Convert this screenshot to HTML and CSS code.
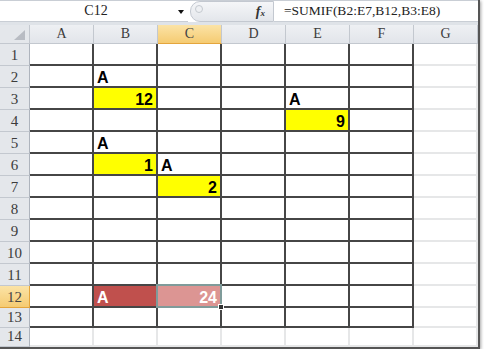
FILE: index.html
```html
<!DOCTYPE html>
<html lang="zh-TW">
<head>
    <meta charset="UTF-8">
    <title>SUMIF</title>
    <link rel="stylesheet" href="styles.css">
</head>
<body>

<div class="window">
    <div class="formula-bar">
        <div class="name-box"><span class="ref">C12</span><span class="arrow"></span></div>
        <div class="fx-group"><span class="knob"></span><span class="fx">f<small>x</small></span></div>
        <div class="formula">=SUMIF(B2:E7,B12,B3:E8)</div>
    </div>

    <div class="sheet">
        <div class="row head">
            <div class="corner"><span class="tri"></span></div>
            <div class="ch">A</div><div class="ch">B</div><div class="ch on">C</div><div class="ch">D</div>
            <div class="ch">E</div><div class="ch">F</div><div class="ch">G</div>
        </div>

        <div class="row">
            <div class="rh">1</div>
            <div class="cell bd"></div><div class="cell bd"></div><div class="cell bd"></div><div class="cell bd"></div><div class="cell bd"></div><div class="cell bd"></div><div class="cell"></div>
        </div>
        <div class="row">
            <div class="rh">2</div>
            <div class="cell bd"></div><div class="cell bd">A</div><div class="cell bd"></div><div class="cell bd"></div><div class="cell bd"></div><div class="cell bd"></div><div class="cell"></div>
        </div>
        <div class="row">
            <div class="rh">3</div>
            <div class="cell bd"></div><div class="cell bd num yel">12</div><div class="cell bd"></div><div class="cell bd"></div><div class="cell bd">A</div><div class="cell bd"></div><div class="cell"></div>
        </div>
        <div class="row">
            <div class="rh">4</div>
            <div class="cell bd"></div><div class="cell bd"></div><div class="cell bd"></div><div class="cell bd"></div><div class="cell bd num yel">9</div><div class="cell bd"></div><div class="cell"></div>
        </div>
        <div class="row">
            <div class="rh">5</div>
            <div class="cell bd"></div><div class="cell bd">A</div><div class="cell bd"></div><div class="cell bd"></div><div class="cell bd"></div><div class="cell bd"></div><div class="cell"></div>
        </div>
        <div class="row">
            <div class="rh">6</div>
            <div class="cell bd"></div><div class="cell bd num yel">1</div><div class="cell bd">A</div><div class="cell bd"></div><div class="cell bd"></div><div class="cell bd"></div><div class="cell"></div>
        </div>
        <div class="row">
            <div class="rh">7</div>
            <div class="cell bd"></div><div class="cell bd"></div><div class="cell bd num yel">2</div><div class="cell bd"></div><div class="cell bd"></div><div class="cell bd"></div><div class="cell"></div>
        </div>
        <div class="row">
            <div class="rh">8</div>
            <div class="cell bd"></div><div class="cell bd"></div><div class="cell bd"></div><div class="cell bd"></div><div class="cell bd"></div><div class="cell bd"></div><div class="cell"></div>
        </div>
        <div class="row">
            <div class="rh">9</div>
            <div class="cell bd"></div><div class="cell bd"></div><div class="cell bd"></div><div class="cell bd"></div><div class="cell bd"></div><div class="cell bd"></div><div class="cell"></div>
        </div>
        <div class="row">
            <div class="rh">10</div>
            <div class="cell bd"></div><div class="cell bd"></div><div class="cell bd"></div><div class="cell bd"></div><div class="cell bd"></div><div class="cell bd"></div><div class="cell"></div>
        </div>
        <div class="row">
            <div class="rh">11</div>
            <div class="cell bd"></div><div class="cell bd"></div><div class="cell bd"></div><div class="cell bd"></div><div class="cell bd"></div><div class="cell bd"></div><div class="cell"></div>
        </div>
        <div class="row">
            <div class="rh on">12</div>
            <div class="cell bd"></div><div class="cell bd red">A</div><div class="cell bd num pink sel">24</div><div class="cell bd"></div><div class="cell bd"></div><div class="cell bd"></div><div class="cell"></div>
        </div>
        <div class="row short">
            <div class="rh">13</div>
            <div class="cell bd"></div><div class="cell bd"></div><div class="cell bd"></div><div class="cell bd"></div><div class="cell bd"></div><div class="cell bd"></div><div class="cell"></div>
        </div>
        <div class="row last">
            <div class="rh">14</div>
            <div class="cell"></div><div class="cell"></div><div class="cell"></div><div class="cell"></div><div class="cell"></div><div class="cell"></div><div class="cell"></div>
        </div>
    </div>
</div>

</body>
</html>
```

FILE: styles.css
```css
body {
    margin: 0;
    background-color: #fff;
}

.window {
    width: 478px;
    height: 347px;
    overflow: hidden;
    background-color: #dfe3e8;
    border-right: 2px solid #555;
    border-bottom: 2px solid #555;
    box-shadow: 1px 1px 3px rgba(0, 0, 0, 0.35);
}

/* barra de fórmulas */
.formula-bar {
    display: flex;
    height: 22px;
    margin-bottom: 3px;
    background-color: #fff;
    border-top: 1px solid #c9ced5;
    box-sizing: border-box;
    font-family: "Liberation Serif", "Noto Sans CJK TC", serif;
    color: #222;
}

.name-box {
    width: 188px;
    display: flex;
    align-items: center;
    border-bottom: 1px solid #c9ced5;
}

.ref {
    flex: 1;
    text-align: center;
    font-size: 14px;
    padding-left: 14px;
}

.arrow {
    width: 0;
    height: 0;
    margin: 1px 4px 0 0;
    border-left: 3px solid transparent;
    border-right: 3px solid transparent;
    border-top: 4px solid #111;
}

.fx-group {
    width: 84px;
    margin: 0 0 0 2px;
    display: flex;
    align-items: center;
    justify-content: space-between;
    padding: 0 8px 0 4px;
    box-sizing: border-box;
    border: 1px solid #c3c8d0;
    border-radius: 10px 0 0 10px;
    background: linear-gradient(#f5f6f8, #e3e6eb);
}

.knob {
    width: 6px;
    height: 6px;
    border-radius: 50%;
    border: 1px solid #c4c9cf;
    background-color: #eef0f3;
    margin-bottom: 6px;
}

.fx {
    font-style: italic;
    font-weight: bold;
    font-size: 14px;
    color: #333;
}

.fx small {
    font-size: 9px;
}

.formula {
    flex: 1;
    font-size: 13.5px;
    line-height: 20px;
    padding-left: 10px;
    border-bottom: 1px solid #c9ced5;
}

/* hoja */
.row {
    display: grid;
    grid-template-columns: 30px repeat(7, 64px);
    height: 22px;
}

.row.head {
    height: 19px;
}

.row.short {
    height: 20px;
}

.row.last {
    height: 19px;
}

.corner,
.ch,
.rh {
    box-sizing: border-box;
    background-color: #e4e7eb;
    border-right: 1px solid #c3c8cf;
    border-bottom: 1px solid #c3c8cf;
    font-family: "Liberation Serif", serif;
    font-size: 14px;
    color: #3c3c3c;
    display: flex;
    justify-content: center;
}

.ch {
    align-items: center;
    background: linear-gradient(#eef0f3, #e2e5ea);
}

.rh {
    align-items: flex-end;
    padding-bottom: 1px;
    font-size: 15px;
    border-right: 1px solid #aeb4bd;
}

.ch.on,
.rh.on {
    background: linear-gradient(#fbe3a6, #f5cb72);
    border-bottom: 1px solid #e4a53c;
    color: #444;
}

.rh.on {
    border-right: 1px solid #e4a53c;
}

.corner {
    justify-content: flex-end;
    align-items: flex-end;
    padding: 0 4px 3px 0;
}

.tri {
    width: 0;
    height: 0;
    border-left: 11px solid transparent;
    border-bottom: 10px solid #b8bcc3;
}

.cell {
    box-sizing: border-box;
    background-color: #fff;
    border-right: 2px solid #e6e7e8;
    border-bottom: 2px solid #e6e7e8;
    display: flex;
    align-items: flex-end;
    padding: 0 3px;
    font-family: "Liberation Sans", Arial, sans-serif;
    font-weight: bold;
    font-size: 16px;
    line-height: 16px;
    color: #000;
}

.cell.bd {
    border-right-color: #464646;
    border-bottom-color: #464646;
}

.num {
    justify-content: flex-end;
}

.yel {
    background-color: #ffff00;
}

.red {
    background-color: #c0504d;
    color: #fff;
}

.pink {
    background-color: #dc9593;
    color: #fff;
}

/* celda activa */
.sel {
    position: relative;
}

.sel::before {
    content: "";
    position: absolute;
    left: -2px;
    top: -2px;
    right: -2px;
    bottom: -2px;
    border: 2px solid #7f9b9a;
}

.sel::after {
    content: "";
    position: absolute;
    right: -4px;
    bottom: -4px;
    width: 4px;
    height: 4px;
    background-color: #333;
    border: 1px solid #fff;
}
```
